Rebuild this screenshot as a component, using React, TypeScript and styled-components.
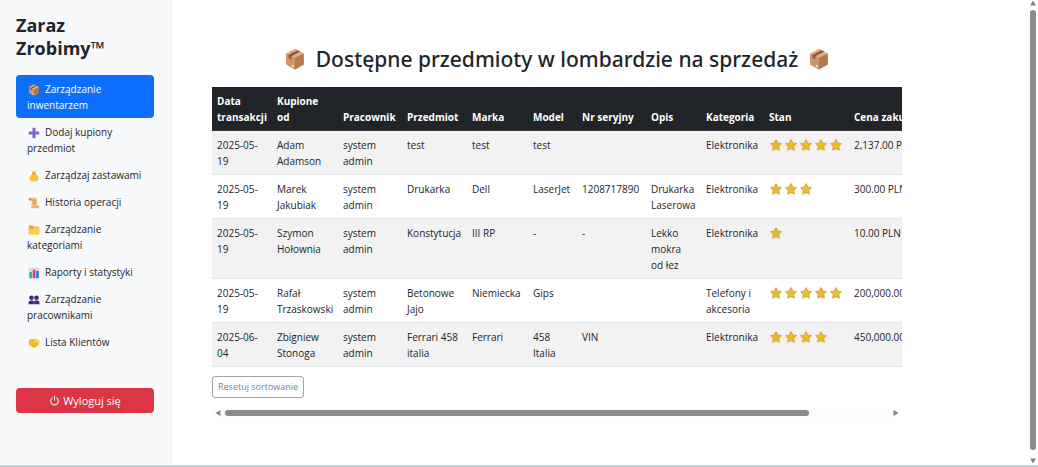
import React from 'react';
import styled, { createGlobalStyle } from 'styled-components';

const GlobalStyle = createGlobalStyle`
  *, *::before, *::after { box-sizing: border-box; }
  body {
    margin: 0;
    background: #fff;
    color: #212529;
    font-family: 'Open Sans', 'Noto Sans', sans-serif;
    font-size: 10px;
    line-height: 16px;
  }
`;

const Page = styled.div`
  display: flex;
  min-height: 100vh;
  border-bottom: 2px solid #c9d3d3;
`;

const Sidebar = styled.aside`
  flex: 0 0 172px;
  padding: 14px 17px 16px 16px;
  background: #f8f9fa;
  border-right: 1px solid #eef0f2;
`;

const Brand = styled.h1`
  margin: 0 0 15px;
  font-size: 18px;
  font-weight: 700;
  line-height: 23px;
`;

const Nav = styled.nav`
  display: flex;
  flex-direction: column;
  margin-bottom: 33px;
`;

const NavLink = styled.a<{ $active?: boolean }>`
  padding: 6px 11px 5px;
  border-radius: 4px;
  text-decoration: none;
  color: ${(p) => (p.$active ? '#fff' : '#212529')};
  background: ${(p) => (p.$active ? '#0d6efd' : 'transparent')};
`;

const NavIcon = styled.svg`
  width: 12px;
  height: 12px;
  margin: 0 5px 0 1px;
  vertical-align: -3px;
`;

const LogoutButton = styled.button`
  display: flex;
  align-items: center;
  justify-content: center;
  gap: 3px;
  width: 100%;
  height: 25px;
  padding: 0;
  border: 0;
  border-radius: 4px;
  background: #dc3545;
  color: #fff;
  font: inherit;
  font-size: 11px;
`;

const Main = styled.main`
  flex: 1;
  min-width: 0;
  padding: 44px 126px 16px 40px;
`;

const Heading = styled.h2`
  display: flex;
  align-items: center;
  justify-content: center;
  gap: 10px;
  margin: 0 0 13px;
  font-family: 'Noto Sans', 'Open Sans', sans-serif;
  font-size: 21px;
  font-weight: 500;
  line-height: 30px;
  white-space: nowrap;
`;

const HeadingIcon = styled.svg`
  flex: none;
  width: 22px;
  height: 22px;
`;

const TableViewport = styled.div`
  overflow: hidden;
`;

const Table = styled.table`
  width: 788px;
  table-layout: fixed;
  border-collapse: collapse;
`;

const Col = styled.col<{ $w: number }>`
  width: ${(p) => p.$w}px;
`;

const HeadCell = styled.th`
  padding: 6px 5px 5px;
  border-bottom: 1px solid #373b3e;
  background: #212529;
  color: #fff;
  font-weight: 700;
  text-align: left;
  vertical-align: bottom;
`;

const Row = styled.tr`
  &:nth-child(odd) {
    background: #f2f2f2;
  }
`;

const Cell = styled.td<{ $nowrap?: boolean }>`
  padding: 6px 5px 5px;
  border-bottom: 1px solid #e3e6e9;
  vertical-align: top;
  white-space: ${(p) => (p.$nowrap ? 'nowrap' : 'normal')};
`;

const Stars = styled.div`
  display: flex;
  align-items: center;
  gap: 3px;
  height: 16px;
  padding-left: 1px;
`;

const StarIcon = styled.svg`
  width: 12px;
  height: 12px;
`;

const ResetButton = styled.button`
  display: block;
  height: 22px;
  margin: 9px 0 10px;
  padding: 0 5px;
  border: 1px solid #a0a5aa;
  border-radius: 3px;
  background: #fff;
  color: #7b838a;
  font: inherit;
  font-size: 9px;
`;

const ScrollRail = styled.div<{ $vertical?: boolean }>`
  display: flex;
  flex-direction: ${(p) => (p.$vertical ? 'column' : 'row')};
  align-items: center;
  gap: 4px;
  flex: none;
  padding: ${(p) => (p.$vertical ? '0 2px 1px' : '2px 3px')};
  background: ${(p) => (p.$vertical ? '#fff' : '#fcfcfc')};
`;

const Track = styled.div<{ $vertical?: boolean }>`
  display: flex;
  flex: 1;
  flex-direction: ${(p) => (p.$vertical ? 'column' : 'row')};
`;

const Thumb = styled.div<{ $share: number }>`
  flex: 0 0 ${(p) => p.$share}%;
  min-width: 6px;
  min-height: 6px;
  border-radius: 3px;
  background: #8b8b8b;
`;

const Arrow = styled.svg`
  flex: none;
  width: 6px;
  height: 6px;
  fill: #858585;
`;

const BoxArt = () => (
  <>
    <path d="M12 1 21.5 6v12L12 23.4 2.500 18V6Z" fill="#c98b61" />
    <path d="m12 1 9.500 5L12 11 2.500 6Z" fill="#e3b183" />
    <path d="M12 11v12.400L2.500 18V6Z" fill="#cf9468" />
    <path d="M12 11v12.400l9.500-5.400V6Z" fill="#b67850" />
    <path d="m14.800 2.500 2.800 1.500L8 9.100v3.500l-3-1.700V7.300Z" fill="#8f5940" />
    <path d="m8.500 18 2.300 1.300v2L8.500 20Z" fill="#f4e6e6" />
  </>
);

const art: Record<string, React.ReactNode> = {
  box: <BoxArt />,
  plus: (
    <path
      d="M10 1.500h4a1 1 0 0 1 1 1V9h6.500a1 1 0 0 1 1 1v4a1 1 0 0 1-1 1H15v6.500a1 1 0 0 1-1 1h-4a1 1 0 0 1-1-1V15H2.500a1 1 0 0 1-1-1v-4a1 1 0 0 1 1-1H9V2.500a1 1 0 0 1 1-1Z"
      fill="#8465c4"
    />
  ),
  bag: (
    <>
      <path d="M7 1.500 12 3l4.500-1.500L15 8c4 2.500 7 6.500 6 10.500-.8 3.500-4 4.500-9 4.500s-8.300-1-9-4.500C2.200 14.500 5 10.500 9 8Z" fill="#fcbf3c" />
      <path d="M8.500 6.500h7V9h-7Z" fill="#e88a2d" />
      <path d="M16 10c3 3 4 7 2 10 4-2 3-7-2-10Z" fill="#f29f2e" />
    </>
  ),
  scroll: (
    <>
      <path d="M4 1.500h14V17H7V7H4A2.700 2.700 0 0 1 4 1.500Z" fill="#f4bd86" />
      <path d="M4 2a2.500 2.500 0 1 0 0 5h3V4.500A2.500 2.500 0 0 0 4 2Z" fill="#d98b55" />
      <path d="M9 17h11a2.700 2.700 0 1 1 0 5.500H9.500A2.700 2.700 0 0 1 9 17Z" fill="#f0ae76" />
      <path d="M9.500 6.500h6M9.500 10h6M9.500 13.500h6" stroke="#c77c4e" strokeWidth="1.400" />
    </>
  ),
  folder: (
    <>
      <path d="M1.500 4.500a2 2 0 0 1 2-2h6l2.500 3h8.500a2 2 0 0 1 2 2V19h-21Z" fill="#eda827" />
      <path d="M1.500 9.500h8l2.500-2h10.500v12a2 2 0 0 1-2 2h-17a2 2 0 0 1-2-2Z" fill="#fccb55" />
    </>
  ),
  chart: (
    <>
      <path d="M1.500 1.500h21v21h-21Z" fill="#d5dae6" />
      <path d="M2.500 10h5.500v12.500H2.500Z" fill="#32b79a" />
      <path d="M9.500 5.500h5v17h-5Z" fill="#e0396d" />
      <path d="M16 8h5.500v14.500H16Z" fill="#2f7fe0" />
    </>
  ),
  people: (
    <g fill="#432b74">
      <circle cx="7" cy="7.500" r="4.600" />
      <circle cx="17" cy="7.500" r="4.600" />
      <path d="M1 20.500v-3A4.500 4.500 0 0 1 5.500 13h3a4 4 0 0 1 3.500 2 4 4 0 0 1 3.500-2h3a4.500 4.500 0 0 1 4.500 4.500v3Z" />
      <path d="M12 13.500v7" stroke="#8f7eb0" strokeWidth="1" />
    </g>
  ),
  handshake: (
    <>
      <path d="m1 7 5-3.500 5.500 1L17 3.500 23 8l-1.500 8-8.500 5.500h-3L2.500 16Z" fill="#fbb934" />
      <path d="m11.500 4.500-4 5.500c1.500 1.500 3.500 1 5.500-1l7 6.500 1.500-7L17 3.500Z" fill="#ffd052" />
      <path d="m7.500 10 4-5.500M13 9l7 6.500M11 13l5 5.500M7.500 15.500l4 4.500" fill="none" stroke="#e08c23" strokeWidth="1.200" />
    </>
  ),
};

const Star = () => (
  <StarIcon viewBox="0 0 24 24" aria-hidden="true">
    <path
      d="m12 1.800 3.200 6.200 7.200 1.200-5.200 5.300 1.400 7.400-6.600-3.200-6.600 3.200 1.400-7.400L1.600 9.200l7.200-1.200Z"
      fill="#e9bd33"
      stroke="#e2ab2f"
      strokeWidth="2.400"
      strokeLinejoin="round"
    />
  </StarIcon>
);

const links = [
  { icon: 'box', label: 'Zarządzanie inwentarzem', active: true },
  { icon: 'plus', label: 'Dodaj kupiony przedmiot' },
  { icon: 'bag', label: 'Zarządzaj zastawami' },
  { icon: 'scroll', label: 'Historia operacji' },
  { icon: 'folder', label: 'Zarządzanie kategoriami' },
  { icon: 'chart', label: 'Raporty i statystyki' },
  { icon: 'people', label: 'Zarządzanie pracownikami' },
  { icon: 'handshake', label: 'Lista Klientów' },
];

const columns = [
  { title: 'Data transakcji', width: 60 },
  { title: 'Kupione od', width: 66 },
  { title: 'Pracownik', width: 64 },
  { title: 'Przedmiot', width: 65 },
  { title: 'Marka', width: 61 },
  { title: 'Model', width: 49 },
  { title: 'Nr seryjny', width: 69 },
  { title: 'Opis', width: 55 },
  { title: 'Kategoria', width: 63 },
  { title: 'Stan', width: 85 },
  { title: 'Cena zakupu', width: 151 },
];

const items = [
  { date: '2025-05-19', from: 'Adam Adamson', item: 'test', brand: 'test', model: 'test', serial: '', desc: '', category: 'Elektronika', stars: 5, price: '2,137.00 PLN' },
  { date: '2025-05-19', from: 'Marek Jakubiak', item: 'Drukarka', brand: 'Dell', model: 'LaserJet', serial: '1208717890', desc: 'Drukarka Laserowa', category: 'Elektronika', stars: 3, price: '300.00 PLN' },
  { date: '2025-05-19', from: 'Szymon Hołownia', item: 'Konstytucja', brand: 'III RP', model: '-', serial: '-', desc: 'Lekko mokra od\u00a0łez', category: 'Elektronika', stars: 1, price: '10.00 PLN' },
  { date: '2025-05-19', from: 'Rafał Trzaskowski', item: 'Betonowe Jajo', brand: 'Niemiecka', model: 'Gips', serial: '', desc: '', category: 'Telefony i akcesoria', stars: 5, price: '200,000.00 PLN' },
  { date: '2025-06-04', from: 'Zbigniew Stonoga', item: 'Ferrari 458 italia', brand: 'Ferrari', model: '458 Italia', serial: 'VIN', desc: '', category: 'Elektronika', stars: 4, price: '450,000.00 PLN' },
];

const BoxIcon = () => (
  <HeadingIcon viewBox="0 0 24 24" aria-hidden="true">
    <BoxArt />
  </HeadingIcon>
);

export default function App() {
  return (
    <>
      <GlobalStyle />
      <Page>
        <Sidebar>
          <Brand>Zaraz Zrobimy™</Brand>
          <Nav>
            {links.map((l) => (
              <NavLink key={l.label} href="#" $active={l.active}>
                <NavIcon viewBox="0 0 24 24" aria-hidden="true">
                  {art[l.icon]}
                </NavIcon>
                {l.label}
              </NavLink>
            ))}
          </Nav>
          <LogoutButton type="button">
            <svg width="11" height="11" viewBox="0 0 16 16" fill="currentColor" aria-hidden="true">
              <path d="M7.300 1h1.400v7H7.300Z" />
              <path d="M3 8.800a5 5 0 1 0 7.500-4.300l.5-1a6.100 6.100 0 1 1-6 0l.5 1A5 5 0 0 0 3 8.800Z" stroke="currentColor" strokeWidth=".4" />
            </svg>
            Wyloguj się
          </LogoutButton>
        </Sidebar>

        <Main>
          <Heading>
            <BoxIcon />
            Dostępne przedmioty w lombardzie na sprzedaż
            <BoxIcon />
          </Heading>
          <TableViewport>
            <Table>
              <colgroup>
                {columns.map((c) => (
                  <Col key={c.title} $w={c.width} />
                ))}
              </colgroup>
              <thead>
                <tr>
                  {columns.map((c) => (
                    <HeadCell key={c.title} scope="col">
                      {c.title}
                    </HeadCell>
                  ))}
                </tr>
              </thead>
              <tbody>
                {items.map((r) => (
                  <Row key={r.from}>
                    <Cell>{r.date}</Cell>
                    <Cell>{r.from}</Cell>
                    <Cell>system admin</Cell>
                    <Cell>{r.item}</Cell>
                    <Cell>{r.brand}</Cell>
                    <Cell>{r.model}</Cell>
                    <Cell>{r.serial}</Cell>
                    <Cell>{r.desc}</Cell>
                    <Cell>{r.category}</Cell>
                    <Cell>
                      <Stars>
                        {Array.from({ length: r.stars }, (_, i) => (
                          <Star key={i} />
                        ))}
                      </Stars>
                    </Cell>
                    <Cell $nowrap>{r.price}</Cell>
                  </Row>
                ))}
              </tbody>
            </Table>
          </TableViewport>
          <ResetButton type="button">Resetuj sortowanie</ResetButton>
          <ScrollRail aria-hidden="true">
            <Arrow viewBox="0 0 6 6"><path d="M5.500 0v6L.5 3Z" /></Arrow>
            <Track>
              <Thumb $share={88} />
            </Track>
            <Arrow viewBox="0 0 6 6"><path d="M.5 0v6l5-3Z" /></Arrow>
          </ScrollRail>
        </Main>

        <ScrollRail $vertical aria-hidden="true">
          <Arrow viewBox="0 0 6 6"><path d="M0 5.500h6L3 .5Z" /></Arrow>
          <Track $vertical>
            <Thumb $share={99} />
          </Track>
          <Arrow viewBox="0 0 6 6"><path d="M0 .5h6l-3 5Z" /></Arrow>
        </ScrollRail>
      </Page>
    </>
  );
}
